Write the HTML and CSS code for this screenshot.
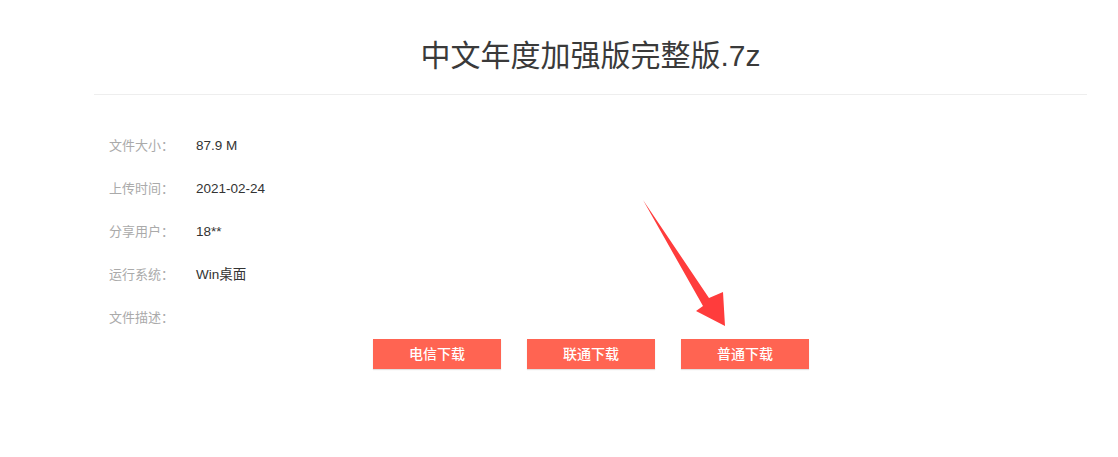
FILE: index.html
```html
<!DOCTYPE html>
<html lang="zh-CN">
<head>
<meta charset="utf-8">
<title>中文年度加强版完整版.7z</title>
<link rel="stylesheet" href="styles.css">
</head>
<body>
<div class="page">
  <h1 class="title">中文年度加强版完整版.7z</h1>
  <div class="info">
    <div class="row"><span class="label">文件大小：</span><span class="value">87.9 M</span></div>
    <div class="row"><span class="label">上传时间：</span><span class="value">2021-02-24</span></div>
    <div class="row"><span class="label">分享用户：</span><span class="value">18**</span></div>
    <div class="row"><span class="label">运行系统：</span><span class="value">Win桌面</span></div>
    <div class="row"><span class="label">文件描述：</span><span class="value"></span></div>
  </div>
  <div class="buttons">
    <a class="btn">电信下载</a>
    <a class="btn">联通下载</a>
    <a class="btn">普通下载</a>
  </div>
  <svg class="arrow" width="100" height="140" viewBox="630 195 100 140" aria-hidden="true">
    <polygon points="643,200 709,298 723,292 725,326 696,311 703,306" fill="#ff3c3c"/>
  </svg>
</div>
</body>
</html>
```
FILE: styles.css
```css
html, body {
  margin: 0;
  padding: 0;
  background: #fff;
}
body {
  font-family: "Liberation Sans", "Noto Sans CJK SC", sans-serif;
  color: #333;
}
.page {
  position: relative;
  width: 993px;
  margin-left: 94px;
  height: 457px;
}
.title {
  margin: 0;
  padding-top: 36px;
  padding-bottom: 18px;
  line-height: 40px;
  font-size: 30px;
  font-weight: normal;
  text-align: center;
  color: #3a3a3a;
  border-bottom: 1px solid #eee;
}
.info {
  padding-top: 29px;
  padding-left: 15px;
}
.row {
  display: flex;
  height: 43px;
  line-height: 43px;
  font-size: 13px;
}
.label {
  width: 87px;
  color: #aaa;
}
.value {
  color: #333;
  font-size: 13.5px;
}
.buttons {
  display: flex;
  justify-content: center;
  gap: 26px;
  padding-left: 1px;
}
.btn {
  display: block;
  width: 128px;
  height: 30px;
  line-height: 30px;
  text-align: center;
  background: #ff6452;
  color: #fff;
  font-size: 14px;
  font-weight: 500;
  box-shadow: 0 1px 1px rgba(0,0,0,0.12);
}
.arrow {
  position: absolute;
  left: 536px;
  top: 195px;
}
```
